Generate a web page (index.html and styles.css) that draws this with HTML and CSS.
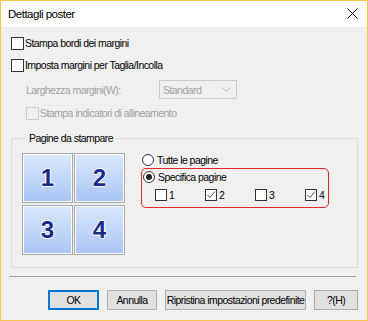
FILE: index.html
```html
<!DOCTYPE html>
<html lang="it">
<head>
  <meta charset="UTF-8" />
  <title>Dettagli poster</title>
  <link rel="stylesheet" href="styles.css">
</head>
<body>
  <div class="dialog">
    <div class="titlebar">
      <span class="title">Dettagli poster</span>
      <svg class="close" width="11" height="11" viewBox="0 0 11 11">
        <path d="M0.5 0.5 L10.5 10.5 M10.5 0.5 L0.5 10.5" stroke="#111" stroke-width="1" fill="none"/>
      </svg>
    </div>

    <div class="content">
      <label class="check row1"><span class="box"></span><span>Stampa bordi dei margini</span></label>
      <label class="check row2"><span class="box"></span><span>Imposta margini per Taglia/Incolla</span></label>

      <div class="margin-row disabled">
        <span class="margin-label">Larghezza margini(W):</span>
        <div class="select">
          <span>Standard</span>
          <svg width="9" height="5" viewBox="0 0 9 5"><path d="M0.5 0.5 L4.5 4.5 L8.5 0.5" stroke="#b8b8b8" fill="none"/></svg>
        </div>
      </div>

      <label class="check row4 disabled"><span class="box"></span><span>Stampa indicatori di allineamento</span></label>

      <fieldset class="group">
        <legend>Pagine da stampare</legend>
        <div class="group-body">
          <div class="tiles">
            <div class="tile">1</div>
            <div class="tile">2</div>
            <div class="tile">3</div>
            <div class="tile">4</div>
          </div>

          <div class="options">
            <label class="radio"><span class="dot"></span><span>Tutte le pagine</span></label>
            <div class="highlight">
              <label class="radio"><span class="dot on"></span><span>Specifica pagine</span></label>
              <div class="pages">
                <label class="page"><span class="box small"></span>1</label>
                <label class="page"><span class="box small checked"><svg width="10" height="10" viewBox="0 0 10 10"><path d="M1.5 5 L4 7.5 L9 1.5" stroke="#444" fill="none"/></svg></span>2</label>
                <label class="page"><span class="box small"></span>3</label>
                <label class="page"><span class="box small checked"><svg width="10" height="10" viewBox="0 0 10 10"><path d="M1.5 5 L4 7.5 L9 1.5" stroke="#444" fill="none"/></svg></span>4</label>
              </div>
            </div>
          </div>
        </div>
      </fieldset>

      <div class="separator"></div>

      <div class="buttons">
        <button class="btn default ok">OK</button>
        <button class="btn cancel">Annulla</button>
        <button class="btn reset">Ripristina impostazioni predefinite</button>
        <button class="btn help">?(H)</button>
      </div>
    </div>
  </div>
</body>
</html>
```

FILE: styles.css
```css
* {
  margin: 0;
  padding: 0;
  box-sizing: border-box;
}

body {
  background-color: #f0f0f0;
  font-family: "Liberation Sans", Arial, sans-serif;
  font-size: 10.5px;
  letter-spacing: -0.55px;
  color: #000;
}

.dialog {
  width: 368px;
  height: 321px;
  border: 1px solid #f3c44c;
  background-color: #f0f0f0;
  display: flex;
  flex-direction: column;
}

.titlebar {
  height: 26px;
  background-color: #fff;
  display: flex;
  align-items: center;
  justify-content: space-between;
  padding: 0 9px 0 7px;
}

.title {
  font-size: 11.5px;
  letter-spacing: -0.5px;
}

.close {
  margin-top: -1px;
}

.content {
  padding: 5px 9px 0 10px;
  display: flex;
  flex-direction: column;
}

.check {
  display: flex;
  align-items: center;
  height: 22px;
}

.box {
  width: 13px;
  height: 13px;
  border: 1px solid #333;
  background-color: #fff;
  margin-right: 1px;
  flex-shrink: 0;
  display: flex;
  align-items: center;
  justify-content: center;
}

.box.small {
  width: 12px;
  height: 12px;
  margin-right: 2px;
}

.disabled {
  color: #a0a0a0;
}

.disabled .box {
  border-color: #cccccc;
  background-color: #f0f0f0;
}

.margin-row {
  display: flex;
  align-items: center;
  height: 19px;
  margin-top: 4px;
  padding-left: 15px;
}

.margin-label {
  width: 133px;
}

.select {
  width: 78px;
  height: 19px;
  border: 1px solid #cccccc;
  background-color: #f0f0f0;
  display: flex;
  align-items: center;
  justify-content: space-between;
  padding: 0 5px 0 3px;
}

.row4 {
  margin-top: 3px;
  padding-left: 15px;
}

.group {
  margin-top: 8px;
  height: 136px;
  border: 1px solid #dcdcdc;
  padding: 8px 10px 0 10px;
}

.group legend {
  margin-left: 5px;
  padding: 0 2px;
  line-height: 13px;
}

.group-body {
  display: flex;
}

.tiles {
  display: grid;
  grid-template-columns: 51px 51px;
  grid-template-rows: 50px 50px;
  gap: 2px 1px;
}

.tile {
  border: 1px solid #a8a8a8;
  box-shadow: inset 0 0 0 1px #fff;
  background: linear-gradient(#dbe8fd, #a9c5f5);
  display: flex;
  align-items: center;
  justify-content: center;
  font-family: "Liberation Sans", Arial, sans-serif;
  font-weight: bold;
  font-size: 24px;
  letter-spacing: 0;
  color: #1a2a88;
  text-shadow: 1px 0 0 #fff, -1px 0 0 #fff, 0 1px 0 #fff, 0 -1px 0 #fff;
}

.options {
  margin-left: 16px;
  margin-top: 1px;
  display: flex;
  flex-direction: column;
}

.radio {
  display: flex;
  align-items: center;
  height: 12px;
}

.dot {
  width: 12px;
  height: 12px;
  border: 1px solid #333;
  border-radius: 50%;
  background-color: #fff;
  margin-left: 1px;
  margin-right: 3px;
  display: flex;
  align-items: center;
  justify-content: center;
}

.dot.on::after {
  content: "";
  width: 6px;
  height: 6px;
  border-radius: 50%;
  background-color: #222;
}

.highlight {
  margin-top: 2px;
  width: 188px;
  border: 1px solid #e0262a;
  border-radius: 5px;
  padding: 2px 0 6px 0;
}

.pages {
  display: grid;
  grid-template-columns: 50px 50px 50px 36px;
  margin-top: 6px;
  padding-left: 13px;
}

.page {
  display: flex;
  align-items: center;
  height: 12px;
}

.separator {
  margin-top: 8px;
  margin-right: 2px;
  margin-left: -2px;
  height: 1px;
  background-color: #a0a0a0;
}

.buttons {
  margin-top: 13px;
  display: flex;
  justify-content: flex-end;
  gap: 8px;
}

.btn {
  height: 20px;
  background-color: #e1e1e1;
  border: 1px solid #adadad;
  font-family: "Liberation Sans", Arial, sans-serif;
  font-size: 10.5px;
  letter-spacing: -0.55px;
  white-space: nowrap;
  color: #000;
}

.btn.default {
  border: 2px solid #0078d7;
}

.ok {
  width: 51px;
}

.cancel {
  width: 50px;
}

.reset {
  width: 141px;
}

.help {
  width: 44px;
}
```
